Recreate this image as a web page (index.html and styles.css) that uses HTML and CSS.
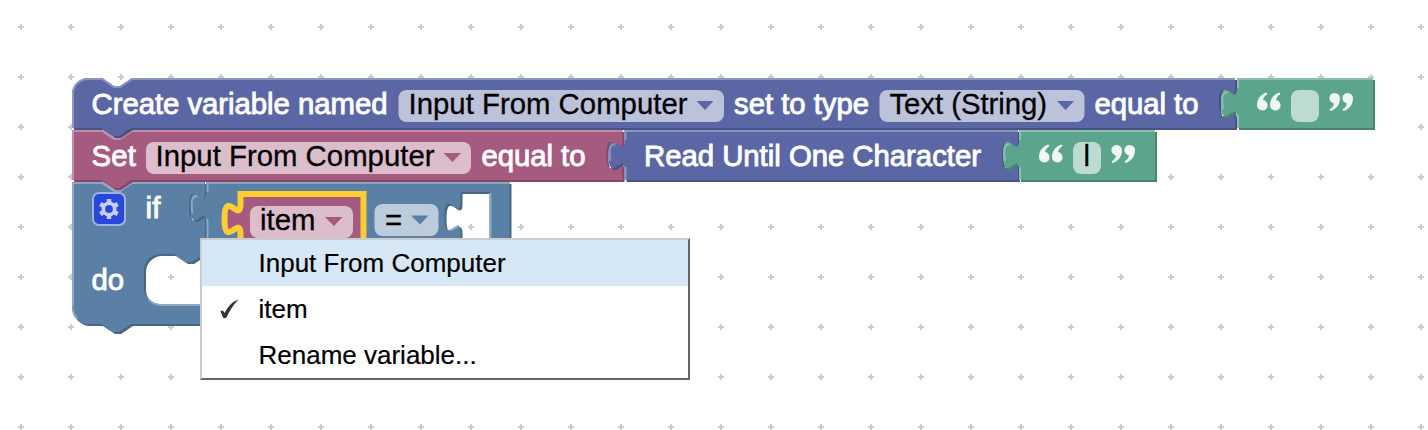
FILE: index.html
```html
<!DOCTYPE html>
<html lang="en">
<head>
<meta charset="utf-8">
<title>Block editor</title>
<link rel="stylesheet" href="styles.css">
</head>
<body>
<main class="workspace">
<svg class="canvas" width="1428" height="430" viewBox="0 0 1428 430">
  <defs>
    <pattern id="grid" x="-4" y="2" width="50" height="50" patternUnits="userSpaceOnUse">
      <path class="cross" d="M22 25h6M25 22v6"/>
    </pattern>
    <path id="s-create" d="M0 8A8 8 0 0 1 8 0H15l6 4 3 0 6-4H581.5V5c0 10-8-8-8 7.5s8-2.5 8 7.5V25H29.5l-6 4-3 0-6-4H0z"/>
    <path id="s-set" d="M0 0H15l6 4 3 0 6-4H275.25V5c0 10-8-8-8 7.5s8-2.5 8 7.5V25H29.5l-6 4-3 0-6-4H0z"/>
    <path id="s-read" d="M0 0H196.75V5c0 10-8-8-8 7.5s8-2.5 8 7.5V25H0V20c0-10-8 8-8-7.5s8 2.5 8-7.5z"/>
    <path id="s-text" d="M0 0H68V25H0V20c0-10-8 8-8-7.5s8 2.5 8-7.5z"/>
    <path id="s-if" d="M0 0H15l6 4 3 0 6-4H66.5V5c0 10-8-8-8 7.5s8-2.5 8 7.5V36H66l-6 4-3 0-6-4h-7a8 8 0 0 0-8 8v9a8 8 0 0 0 8 8H80V71H29.5l-6 4-3 0-6-4H8a8 8 0 0 1-8-8z"/>
    <path id="s-compare" fill-rule="evenodd" d="M0 0H151.5V33H0V20c0-10-8 8-8-7.5s8 2.5 8-7.5zM127 5H141.5V31H127V25V20c0-10-8 8-8-7.5s8 2.5 8-7.5z"/>
    <path id="s-hole" fill-rule="evenodd" d="M0 0H151.5V33H0V20c0-10-8 8-8-7.5s8 2.5 8-7.5zM127 5H141.5V31H127V25c0-10-8 8-8-7.5s8 2.500 8-7.500z"/>
    <path id="s-item" d="M0 0H61.5V25H0V20c0-10-8 8-8-7.5s8 2.5 8-7.5z"/>
    <g id="quote">
      <path d="M9.500 0C3.500 2 0 6.500 0 13a5.300 5.300 0 1 0 6-5.500C6.500 5 8 3 10.500 1.500z"/>
      <path d="M22.500 0C16.500 2 13 6.500 13 13a5.300 5.300 0 1 0 6-5.500C19.500 5 21 3 23.500 1.500z"/>
    </g>
  </defs>
  <rect width="1428" height="430" fill="url(#grid)"/>

  <g class="block conditional" transform="translate(72 182) scale(2)">
    <use class="dark" href="#s-if" x="1" y="1"/>
    <use class="body" href="#s-if"/>
    <path class="light" d="M.5 62.500V.5H15l6 4 3 0 6-4H66M2.800 68.200A7.500 7.500 0 0 1 .5 63M38.300 58.700A8.500 8.500 0 0 0 44 61.500H80M61.500 19.300l2.300-2.100"/>
  </g>
  <g class="block conditional" transform="translate(206.500 182) scale(2)">
    <use class="dark" href="#s-hole" x="1" y="1"/>
    <use class="body" href="#s-hole"/>
    <path class="light" d="M.5 33V18.500M-7 15.500q-1.500-9 2.500-8.300M.5 5V.5H151M142 5.500V31M122 24.300l4-2.100"/>
  </g>

  <g class="block setter" transform="translate(72 130) scale(2)">
    <use class="dark" href="#s-set" x="1" y="1"/>
    <use class="body" href="#s-set"/>
    <path class="light" d="M.5 25V.5H15l6 4 3 0 6-4H275.250M270.250 19.300l2.300-2.100"/>
  </g>
  <g class="block create" transform="translate(624.500 130) scale(2)">
    <use class="dark" href="#s-read" x="1" y="1"/>
    <use class="body" href="#s-read"/>
    <path class="light" d="M.5 25V18.500M-7 15.500q-1.500-9 2.500-8.300M.5 5V.5H196.500M191.750 19.300l2.300-2.100"/>
  </g>
  <g class="block create" transform="translate(72 78) scale(2)">
    <use class="dark" href="#s-create" x="1" y="1"/>
    <use class="body" href="#s-create"/>
    <path class="light" d="M.5 25V8A7.500 7.500 0 0 1 8 .5H15l6 4 3 0 6-4H581.500M576.500 19.300l2.300-2.100"/>
  </g>
  <g class="block string" transform="translate(1237 78) scale(2)">
    <use class="dark" href="#s-text" x="1" y="1"/>
    <use class="body" href="#s-text"/>
    <path class="light" d="M.5 25V18.500M-7 15.500q-1.500-9 2.500-8.300M.5 5V.5H68"/>
  </g>
  <g class="block string" transform="translate(1019 130) scale(2)">
    <use class="dark" href="#s-text" x="1" y="1"/>
    <use class="body" href="#s-text"/>
    <path class="light" d="M.5 25V18.500M-7 15.500q-1.500-9 2.500-8.300M.5 5V.5H68"/>
  </g>
  <g class="block setter selected" transform="translate(240.500 194) scale(2)">
    <use class="body" href="#s-item"/>
  </g>

  <g class="pill">
    <rect x="398.500" y="90" width="325.500" height="32" rx="8"/>
    <rect x="879.500" y="90" width="205" height="32" rx="8"/>
    <rect x="1291" y="90" width="28" height="32" rx="8"/>
    <rect x="146" y="142" width="325" height="32" rx="8"/>
    <rect x="1073" y="142" width="28" height="32" rx="8"/>
    <rect x="250" y="206" width="103" height="32" rx="8"/>
    <rect x="374.500" y="204" width="64" height="32" rx="8"/>
  </g>
  <g class="label">
    <text x="91.500" y="113.500" textLength="296">Create variable named</text>
    <text x="734" y="113.500" textLength="135">set to type</text>
    <text x="1094.500" y="113.500" textLength="104">equal to</text>
    <text x="91.500" y="165.500" textLength="44.500">Set</text>
    <text x="481.500" y="165.500" textLength="104">equal to</text>
    <text x="644" y="165.500" textLength="337">Read Until One Character</text>
    <text x="145.500" y="217.500" textLength="15">if</text>
    <text x="91.500" y="290" textLength="32.500">do</text>
  </g>
  <g class="value">
    <text x="408.500" y="113.500" textLength="279">Input From Computer</text>
    <text x="889.500" y="113.500" textLength="157.500">Text (String)</text>
    <text x="155.500" y="165.500" textLength="279">Input From Computer</text>
    <text x="1083.500" y="165.500">l</text>
    <text x="260" y="229.500" textLength="55.500">item</text>
    <text x="385" y="229.500">=</text>
  </g>
  <path class="arrow create" d="M696.500 101h17l-8.500 9zM1057 101h17l-8.500 9z"/>
  <path class="arrow setter" d="M443.500 153h17.500l-8.500 9zM325 217h17.500l-8.500 9z"/>
  <path class="arrow conditional" d="M411 215.500h17.500l-8.500 9z"/>
  <g class="quotes">
    <use href="#quote" transform="translate(1257 92.500)"/>
    <use href="#quote" transform="rotate(180 676.500 55.500)"/>
    <use href="#quote" transform="translate(1039 144.500)"/>
    <use href="#quote" transform="rotate(180 567.500 81.500)"/>
  </g>
  <g class="gear">
    <rect x="93" y="193" width="32" height="32" rx="6"/>
    <circle cx="109" cy="209" r="5.700"/>
    <path d="M109 199v4M109 215v4M100.300 204l3.500 2M114.200 212l3.500 2M100.300 214l3.500-2M114.200 206l3.500-2"/>
  </g>
</svg>
<ul class="menu">
  <li class="option hover"><span class="mark"></span><span>Input From Computer</span></li>
  <li class="option"><span class="mark"><svg width="20" height="22" viewBox="0 0 20 22"><path class="check" d="M.5 13.500q2-2.500 4 1.500C8 9 12 3.500 18.500 1.500 13 7 9.500 13 6.500 19.500q-2 1.500-3.500 0z"/></svg></span><span>item</span></li>
  <li class="option"><span class="mark"></span><span>Rename variable...</span></li>
</ul>
</main>
</body>
</html>
```

FILE: styles.css
```css
body {
  margin: 0;
  background: #fff;
  font-family: "Liberation Sans", Arial, sans-serif;
}
.workspace {
  position: relative;
  width: 1428px;
  height: 430px;
  overflow: hidden;
}
.canvas { display: block; }
.cross { stroke: #ccc; stroke-width: 2; }

.create { --main: #5b67a5; --shade: #495284; --shine: #8c95c0; }
.setter { --main: #a55b80; --shade: #844966; --shine: #c08ca6; }
.conditional { --main: #5b80a5; --shade: #496684; --shine: #8ca6c0; }
.string { --main: #5ba58c; --shade: #498470; --shine: #8cc0ae; }

.body { fill: var(--main); }
.dark { fill: var(--shade); }
.light { fill: none; stroke: var(--shine); stroke-width: 1; }
.selected .body { stroke: #fc3; stroke-width: 3; }
.arrow { fill: var(--main); }
.pill { fill: #fff; fill-opacity: .6; }
.label, .value { font-size: 29.33px; }
.label { fill: #fff; stroke: #fff; stroke-width: .9; }
.value { fill: #000; stroke: #000; stroke-width: .3; }
.quotes { fill: #fff; fill-opacity: .9; }

.gear rect { fill: #2a47dc; stroke: #9fb4dc; stroke-width: 2; }
.gear circle { fill: none; stroke: #c5d0ea; stroke-width: 3.6; }
.gear path { stroke: #c5d0ea; stroke-width: 4.5; }

.menu {
  position: absolute;
  left: 200px;
  top: 238px;
  box-sizing: border-box;
  width: 490px;
  height: 142px;
  margin: 0;
  padding: 0;
  list-style: none;
  background: #fff;
  border: 2px solid;
  border-color: #ccc #666 #666 #ccc;
  font-size: 26px;
  -webkit-text-stroke: .2px #000;
}
.option {
  display: flex;
  align-items: center;
  height: 46px;
  line-height: 46px;
}
.hover { background: #d6e8f6; }
.mark {
  display: flex;
  box-sizing: border-box;
  width: 56.5px;
  padding-left: 18px;
}
.check { fill: #333; }
```
